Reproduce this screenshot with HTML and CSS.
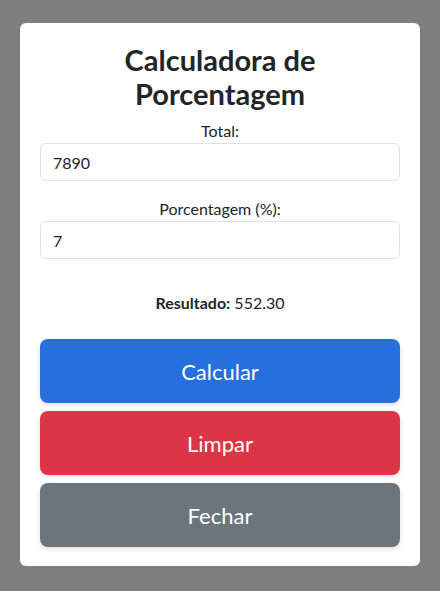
FILE: index.html
```
<!DOCTYPE html>
<html lang="pt">
<head>
<meta charset="utf-8">
<title>Calculadora de Porcentagem</title>
<link rel="stylesheet" href="styles.css">
</head>
<body>
<div class="overlay">
  <div class="card">
    <h3 class="title">Calculadora de Porcentagem</h3>
    <div class="field">
      <label class="label" for="total">Total:</label>
      <input class="input" id="total" type="text" value="7890">
    </div>
    <div class="field">
      <label class="label" for="pct">Porcentagem (%):</label>
      <input class="input" id="pct" type="text" value="7">
    </div>
    <p class="result"><strong>Resultado:</strong> 552.30</p>
    <div class="buttons">
      <button class="btn btn-blue">Calcular</button>
      <button class="btn btn-red">Limpar</button>
      <button class="btn btn-gray">Fechar</button>
    </div>
  </div>
</div>
</body>
</html>
```
FILE: styles.css
```
* { box-sizing: border-box; }
html, body { margin: 0; padding: 0; }
body {
  background: #7f7f7f;
  font-family: Lato, "Open Sans", sans-serif;
  color: #212529;
  height: 591px;
  overflow: hidden;
}
.overlay {
  padding: 23px 20px;
}
.card {
  background: #fff;
  border-radius: 6px;
  padding: 20px;
  height: 543px;
  display: flex;
  flex-direction: column;
}
.title {
  margin: 0 0 9px;
  font-size: 29px;
  font-weight: 700;
  line-height: 33.6px;
  text-align: center;
}
.field {
  margin-bottom: 16px;
  display: flex;
  flex-direction: column;
}
.label {
  text-align: center;
  font-size: 16px;
  line-height: 24px;
}
.input {
  height: 38px;
  border: 1px solid #dee2e6;
  border-radius: 6px;
  padding: 6px 12px;
  font-family: inherit;
  font-size: 16px;
  color: #212529;
  background: #fff;
  outline: none;
}
.result {
  text-align: center;
  margin: 16px 0 24px;
  font-size: 16px;
  line-height: 24px;
}
.result strong { font-weight: 700; }
.buttons {
  display: flex;
  flex-direction: column;
  gap: 8px;
}
.btn {
  height: 64px;
  border: none;
  border-radius: 8px;
  color: #fff;
  font-family: inherit;
  font-size: 22px;
  box-shadow: 0 2px 5px rgba(0,0,0,0.12);
}
.btn-blue { background: #2570dd; }
.btn-red { background: #dc3545; }
.btn-gray { background: #6c757d; }
```
